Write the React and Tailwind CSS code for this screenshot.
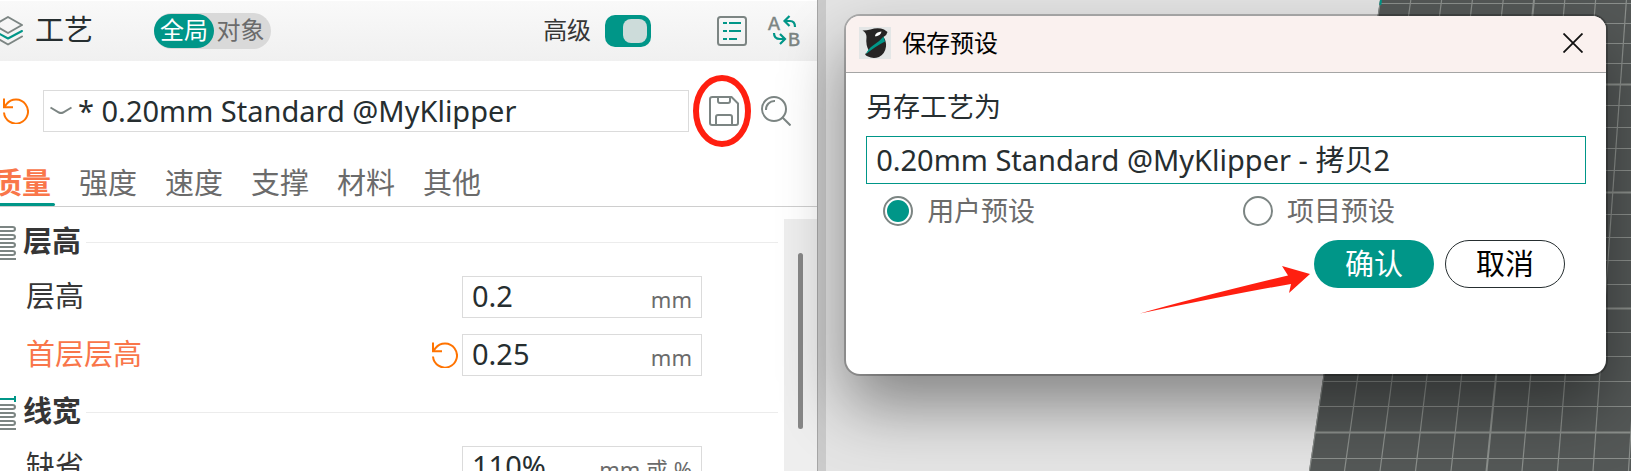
import { useState } from "react";

const VERTICALS = Array.from({ length: 11 }, (_, i) => i);
const HORIZONTALS = [3, 23, 43, 63, 84, 105, 127, 148, 170, 192, 214, 237, 260, 284, 308, 332, 356, 381, 406, 432, 458];

function RevertIcon() {
  return (
    <svg width="26" height="26" viewBox="0 0 26 26" fill="none" stroke="#ff7300" strokeWidth="2" aria-hidden="true">
      <path d="M1 14.500A12 12 0 1 0 3.500 6.200L1.500 8.800" />
      <path d="M1 0.500V9.200H10" />
    </svg>
  );
}

function LayersIcon() {
  return (
    <svg width="30" height="30" viewBox="0 0 30 30" fill="none" stroke="#7c8583" strokeWidth="2" strokeLinejoin="round" strokeLinecap="round" aria-hidden="true">
      <path d="M15 1L29 9L15 17L1 9Z" />
      <path d="M1 15L15 22.500L29 15" stroke="#009688" />
      <path d="M1 20.500L15 28.500L29 20.500" />
    </svg>
  );
}

function ListIcon() {
  return (
    <svg width="30" height="30" viewBox="0 0 30 30" fill="none" strokeWidth="2" aria-hidden="true">
      <rect x="1" y="1" width="28" height="28" rx="2.500" stroke="#7c8583" />
      <path d="M6 7H10M12 7H24M6 15H10M12 15H24M6 23H10M12 23H20" stroke="#009688" />
    </svg>
  );
}

function CompareIcon() {
  return (
    <svg width="32" height="32" viewBox="0 0 32 32" fill="none" className="overflow-visible" aria-hidden="true">
      <text x="-1" y="15" fontSize="20" fill="#7c8583" stroke="#7c8583" strokeWidth="0.400" fontFamily="Liberation Mono, monospace">A</text>
      <text x="19" y="31" fontSize="20" fill="#7c8583" stroke="#7c8583" strokeWidth="0.400" fontFamily="Liberation Mono, monospace">B</text>
      <g stroke="#009688" strokeWidth="2.200">
        <path d="M20.500 1L15.500 6L20.500 11M16 6H21Q26 6 26 12" />
        <path d="M11 19L16 24L11 29M15.500 24H11Q5 24 5 18" />
      </g>
    </svg>
  );
}

function SaveIcon() {
  return (
    <svg width="30" height="30" viewBox="0 0 30 30" fill="none" stroke="#7c8583" strokeWidth="2" strokeLinejoin="round" aria-hidden="true">
      <path d="M3.500 1H22.500L29 7.500V27Q29 29 27 29H3Q1 29 1 27V3Q1 1 3.500 1Z" />
      <path d="M9 1V5Q9 7 11 7H19Q21 7 21 5V1" />
      <path d="M7 29V21Q7 19 9 19H21Q23 19 23 21V29" />
    </svg>
  );
}

function SearchIcon() {
  return (
    <svg width="30" height="30" viewBox="0 0 30 30" fill="none" stroke="#7c8583" strokeWidth="2" aria-hidden="true">
      <circle cx="13" cy="13" r="12" />
      <path d="M21.500 21.500L29.500 29.500" />
      <path d="M5 14A8.500 8.500 0 0 1 14 5" />
    </svg>
  );
}

function CoilIcon({ ruler }) {
  return (
    <svg width="32" height="36" viewBox="0 0 32 36" fill="none" stroke="#7c8583" strokeWidth="2" aria-hidden="true">
      {ruler ? (
        <path d="M1 4H31M31 1V7" stroke="#009688" />
      ) : (
        <path d="M4 2H28.500Q31 2 31 4T28.500 6H4" />
      )}
      <path d="M4 10H28.500Q31 10 31 12T28.500 14H4" />
      <path d="M4 18H28.500Q31 18 31 20T28.500 22H4" />
      <path d="M4 26H28.500Q31 26 31 28T28.500 30H4" />
      <path d="M4 34H32" />
    </svg>
  );
}

function OrcaLogo() {
  return (
    <svg width="32" height="32" viewBox="0 0 32 32" aria-hidden="true">
      <rect width="32" height="32" fill="#e4e6e6" />
      <path d="M3.500 3.500Q8 3.500 11.500 2.500Q19 0 25 2.500L28.500 5Q28 8 24.500 10Q27.500 14 27 19.500Q26 27 20 30Q14 32 9 29.500Q6.500 28.500 6 27Q9 25.500 10 24Q6.500 18 7.500 10Q7.500 5.500 3.500 3.500Z" fill="#262424" />
      <path d="M24.500 9.500L26 14.500Q17 19 7 27Q9 22 14 18.500Q21 14 24.500 9.500Z" fill="#009688" />
      <path d="M16 8.500Q17 5 22.500 4.500Q22 8.500 16.500 9.500Z" fill="#fff" />
    </svg>
  );
}

function GroupTitle({ title, ruler }) {
  return (
    <div className="flex h-[69px] items-center pt-0.5 pr-1.5">
      <div className="-ml-4 shrink-0">
        <CoilIcon ruler={ruler} />
      </div>
      <h2 className="ml-[7px] pb-1 text-[29px] leading-10 font-bold text-[#363636]">{title}</h2>
      <div className="ml-[5px] h-px flex-1 bg-[#ececec]" />
    </div>
  );
}

function SettingRow({ id, label, value, unit, changed }) {
  return (
    <div className="grid grid-cols-[432px_30px_240px] items-center">
      <label htmlFor={id} className={changed ? "pb-0.5 pl-[26px] text-[29px] leading-10 text-[#f9764a]" : "pb-0.5 pl-[26px] text-[29px] leading-10 text-[#363636]"}>
        {label}
      </label>
      <div>
        {changed && (
          <button type="button" aria-label="还原" className="block">
            <RevertIcon />
          </button>
        )}
      </div>
      <div className="flex h-[42px] items-center border border-[#dbdbdb] bg-white px-[9px]">
        <input id={id} defaultValue={value} className="w-0 flex-1 pb-0.5 text-[29px] leading-10 text-[#262e30] outline-none" />
        <span className="pt-1 text-[22px] text-[#6b6b6b]">{unit}</span>
      </div>
    </div>
  );
}

function ProcessPanel() {
  const [tab, setTab] = useState("质量");
  return (
    <aside className="flex w-[50.1%] shrink-0 flex-col overflow-hidden bg-white">
      <header className="flex h-[61px] shrink-0 items-center border-t border-white bg-linear-to-b from-[#f9f9f9] to-[#f0f0f0] pr-4 pb-px">
        <div className="-ml-[7px]">
          <LayersIcon />
        </div>
        <h1 className="ml-3 pb-0.5 text-[29px] leading-10 text-[#262e30]">工艺</h1>
        <div className="ml-[61px] flex h-9 items-center rounded-full bg-[#d9d9d9] text-2xl">
          <button type="button" className="h-[34px] w-[60px] rounded-full bg-[#009688] pb-0.5 text-white">全局</button>
          <button type="button" className="h-[34px] w-[57px] pr-1 pb-0.5 text-[#6b6b6b]">对象</button>
        </div>
        <label htmlFor="advanced" className="ml-auto pb-0.5 text-2xl text-[#363636]">高级</label>
        <input
          id="advanced"
          type="checkbox"
          role="switch"
          defaultChecked
          className="ml-3.5 flex h-8 w-[46px] appearance-none items-center rounded-[10px] bg-[#009688] px-1 before:h-6 before:w-6 before:rounded-lg before:bg-[#cddcda] checked:justify-end"
        />
        <button type="button" aria-label="参数列表" className="ml-[66px]">
          <ListIcon />
        </button>
        <button type="button" aria-label="比较预设" className="ml-[22px]">
          <CompareIcon />
        </button>
      </header>

      <div className="mt-[29px] flex shrink-0 items-center pr-[26px] pl-[3px]">
        <button type="button" aria-label="还原预设">
          <RevertIcon />
        </button>
        <div className="relative ml-3.5 flex-1">
          <select aria-label="预设" className="block h-[42px] w-full appearance-none border border-[#dbdbdb] bg-white pb-0.5 pl-[34px] text-[29px] leading-10 text-[#262e30]">
            <option>* 0.20mm Standard @MyKlipper</option>
          </select>
          <svg className="pointer-events-none absolute top-4 left-[7px]" width="22" height="10" viewBox="0 0 22 10" fill="none" stroke="#7c8583" strokeWidth="2" aria-hidden="true">
            <path d="M0.500 1.500L9 6.500Q11 7.500 13 6.500L21.500 1.500" />
          </svg>
        </div>
        <button type="button" aria-label="保存" className="relative ml-5">
          <SaveIcon />
          <svg className="pointer-events-none absolute -top-5 -left-4 overflow-visible" width="60" height="73" viewBox="0 0 60 73" fill="none" aria-hidden="true">
            <ellipse cx="29" cy="35" rx="26" ry="33" stroke="#ff1f10" strokeWidth="6" />
          </svg>
        </button>
        <button type="button" aria-label="搜索" className="ml-[22px]">
          <SearchIcon />
        </button>
      </div>

      <nav className="mt-7 -ml-[7px] flex h-[47px] shrink-0 gap-7 border-b border-[#cecece] text-[29px]">
        {["质量", "强度", "速度", "支撑", "材料", "其他"].map((name) => (
          <button
            key={name}
            type="button"
            onClick={() => setTab(name)}
            className={tab === name ? "relative pb-px font-bold text-[#f9764a]" : "relative pb-px text-[#6b6b6b]"}
          >
            {name}
            {tab === name && <span className="absolute -right-1 bottom-0 left-0 h-[3px] rounded-r bg-[#009688]" />}
          </button>
        ))}
      </nav>

      <div className="flex min-h-0 flex-1">
        <div className="min-w-0 flex-1">
          <GroupTitle title="层高" />
          <div className="flex flex-col gap-4 pb-px">
            <SettingRow id="layer" label="层高" value="0.2" unit="mm" />
            <SettingRow id="first-layer" label="首层层高" value="0.25" unit="mm" changed />
          </div>
          <GroupTitle title="线宽" ruler />
          <SettingRow id="default-width" label="缺省" value="110%" unit="mm 或 %" />
        </div>
        <div className="mt-3 w-[33px] bg-[#eeeeee] pt-[34px]">
          <div className="ml-3.5 h-44 w-[5px] rounded-full bg-[#878787]" />
        </div>
      </div>
    </aside>
  );
}

function PrintBed() {
  return (
    <svg className="absolute inset-y-0 right-0" width="322" height="471" viewBox="1309 0 322 471" fill="none" aria-hidden="true">
      <defs>
        <clipPath id="bed">
          <path d="M1380 0H1631V471H1309Z" />
        </clipPath>
      </defs>
      <g clipPath="url(#bed)">
        <rect x="1309" width="322" height="471" fill="#545857" />
        {HORIZONTALS.map((y, i) => (
          <path key={y} d={`M1309 ${y + 0.5}H1631`} stroke="#8b8f8c" strokeWidth={i % 5 === 4 ? 2 : 1} />
        ))}
        {VERTICALS.map((i) => (
          <path key={i} d={`M${1380 + 30.8 * i} 0L${1309 + 35.5 * i} 471`} stroke="#8b8f8c" strokeWidth={i % 5 === 0 ? 2 : 1.2} />
        ))}
        <path d="M1380.500 0L1379.800 5" stroke="#009688" strokeWidth="3" />
      </g>
    </svg>
  );
}

function Radio({ label, checked }) {
  return (
    <label className="flex items-center gap-3.5 pl-[17px] text-[27px] text-[#6b6b6b]">
      <input
        type="radio"
        name="target"
        defaultChecked={checked}
        className="grid h-[30px] w-[30px] appearance-none place-items-center rounded-full border-2 border-[#7c8583] before:h-[22px] before:w-[22px] before:rounded-full checked:before:bg-[#009688]"
      />
      {label}
    </label>
  );
}

function SaveDialog() {
  return (
    <section
      role="dialog"
      aria-labelledby="dialog-title"
      className="relative rounded-[14px] bg-white shadow-[0_0_0_2px_rgba(0,0,0,0.24),0_32px_64px_rgba(0,0,0,0.42)]"
    >
      <header className="flex h-[57px] items-center rounded-t-[14px] border-b border-[#a5a5a5] bg-[#faf1ef] pr-[23px] pb-0.5 pl-[13px]">
        <OrcaLogo />
        <h2 id="dialog-title" className="ml-[11px] text-2xl text-black">保存预设</h2>
        <button type="button" aria-label="关闭" className="ml-auto">
          <svg width="20" height="20" viewBox="0 0 20 20" stroke="#111" strokeWidth="1.800" aria-hidden="true">
            <path d="M0.500 0.500L19.500 19.500M19.500 0.500L0.500 19.500" />
          </svg>
        </button>
      </header>
      <form className="px-5 pt-3.5 pb-[86px]" onSubmit={(e) => e.preventDefault()}>
        <label htmlFor="preset-name" className="block text-[27px] leading-10 text-[#262e30]">另存工艺为</label>
        <input
          id="preset-name"
          defaultValue="0.20mm Standard @MyKlipper - 拷贝2"
          className="mt-[9px] block h-12 w-full border border-[#009688] bg-white px-[9px] pb-1 text-[29px] text-[#262e30] outline-none"
        />
        <div className="grid h-14 grid-cols-2 items-center pb-0.5">
          <Radio label="用户预设" checked />
          <Radio label="项目预设" />
        </div>
        <div className="flex justify-end gap-[11px] pr-[21px] text-[29px]">
          <div className="relative">
            <svg className="pointer-events-none absolute top-6 right-full mr-1" width="172" height="52" viewBox="0 0 172 52" fill="#ff1f10" aria-hidden="true">
              <path d="M2 49.500Q60 33 150 11.500L144 2L172 10L151 29L153 20Q110 27 2 49.500Z" />
            </svg>
            <button type="submit" className="block h-12 w-[120px] rounded-full bg-[#009688] pb-px text-white">确认</button>
          </div>
          <button type="button" className="h-12 w-[120px] rounded-full border border-[#262e30] bg-white pb-px text-black">取消</button>
        </div>
      </form>
    </section>
  );
}

export default function App() {
  return (
    <div lang="zh-CN" className="flex h-screen overflow-hidden bg-[#e4e4e4] font-['Noto_Sans','Noto_Sans_CJK_SC',sans-serif]">
      <ProcessPanel />
      <div className="w-[9px] shrink-0 border-l border-[#a6a6a6] bg-[#cbcbcb]" />
      <main className="relative min-w-0 flex-1 pt-4 pr-[25px] pl-5">
        <PrintBed />
        <SaveDialog />
      </main>
    </div>
  );
}
